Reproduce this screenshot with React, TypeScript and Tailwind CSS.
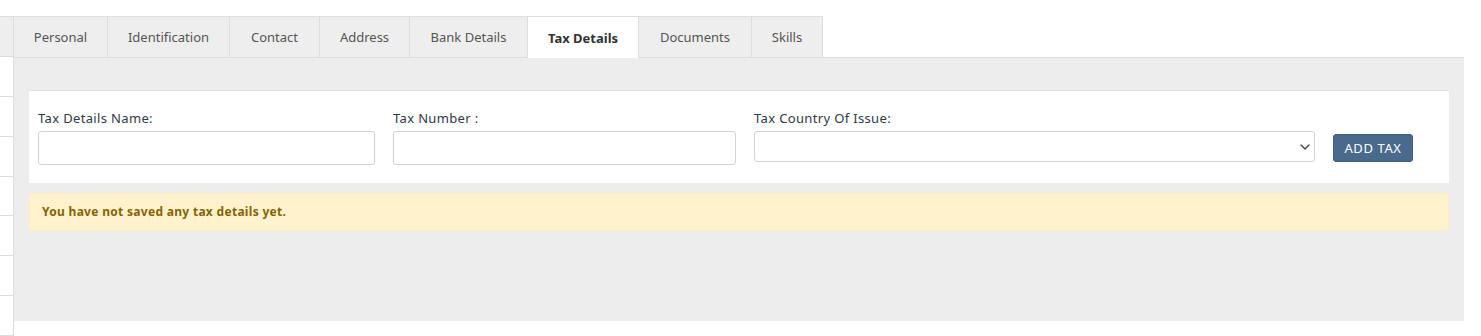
import React from 'react';

const tabs = [
  { label: 'Personal', w: 'w-[94px]' },
  { label: 'Identification', w: 'w-[122px]' },
  { label: 'Contact', w: 'w-[90px]' },
  { label: 'Address', w: 'w-[90px]' },
  { label: 'Bank Details', w: 'w-[118px]' },
  { label: 'Tax Details', w: 'w-[111px]', active: true },
  { label: 'Documents', w: 'w-[113px]' },
  { label: 'Skills', w: 'w-[71px]' },
];

function Chevron() {
  return (
    <svg width="10" height="6" viewBox="0 0 10 6" fill="none" className="text-[#444]">
      <path d="M1 1l4 4 4-4" stroke="currentColor" strokeWidth="1.4" strokeLinecap="round" strokeLinejoin="round" />
    </svg>
  );
}

export default function App() {
  return (
    <div className="h-[336px] w-[1481px] bg-white font-['Noto_Sans',sans-serif] text-[#333] flex pt-4 overflow-hidden">
      {/* clipped side column */}
      <div className="w-[14px] shrink-0 border-r border-[#dcdcdc] flex flex-col">
        <div className="h-[41px] bg-[#eeeeee] border-t border-b border-[#dcdcdc]" />
        {[0, 1, 2, 3, 4, 5, 6].map((i) => (
          <div key={i} className="h-[40px] border-b border-[#dcdcdc]" />
        ))}
      </div>

      <div className="w-[1450px] shrink-0 flex flex-col">
        {/* tabs */}
        <div className="flex h-[42px]">
          {tabs.map((t) => (
            <div
              key={t.label}
              className={`${t.w} h-[42px] pt-[2px] flex items-center justify-center border border-[#dedede] border-l-0 text-[13px] ${
                t.active ? 'bg-white font-bold text-[#333] border-b-0' : 'bg-[#eeeeee] text-[#555]'
              }`}
            >
              {t.label}
            </div>
          ))}
          <div className="flex-1 border-b border-[#dedede]" />
        </div>

        {/* panel */}
        <div className="h-[263px] bg-[#ededed] px-[15px] pt-[32px]">
          <div className="bg-white border-t border-[#e0e0e6] h-[93px] flex items-start pl-[9px] pt-[19px] gap-[18px]">
            <div className="w-[337px] flex flex-col">
              <label className="text-[13px] tracking-[0.35px] leading-[16px] text-[#2f3a45]">Tax Details Name:</label>
              <input className="mt-[5px] h-[34px] border border-[#cfd4d8] rounded-[3px] outline-none px-2" />
            </div>
            <div className="w-[343px] flex flex-col">
              <label className="text-[13px] tracking-[0.35px] leading-[16px] text-[#2f3a45]">Tax Number :</label>
              <input className="mt-[5px] h-[34px] border border-[#cfd4d8] rounded-[3px] outline-none px-2" />
            </div>
            <div className="w-[561px] flex flex-col">
              <label className="text-[13px] tracking-[0.35px] leading-[16px] text-[#2f3a45]">Tax Country Of Issue:</label>
              <div className="mt-[5px] h-[31px] border border-[#cfd4d8] rounded-[3px] flex items-center justify-end pr-[4px]">
                <Chevron />
              </div>
            </div>
            <button className="mt-[24px] w-[80px] h-[28px] bg-[#4a6a8d] border border-[#3f5d7e] rounded-[3px] text-white text-[13px] tracking-[0.6px] leading-none">
              ADD TAX
            </button>
          </div>

          <div className="mt-[10px] h-[38px] bg-[#fff2cc] border border-[#ffeebd] rounded-[2px] flex items-center pl-[12px] text-[12px] tracking-[0.3px] font-bold text-[#856404]">
            You have not saved any tax details yet.
          </div>
        </div>
      </div>
    </div>
  );
}
